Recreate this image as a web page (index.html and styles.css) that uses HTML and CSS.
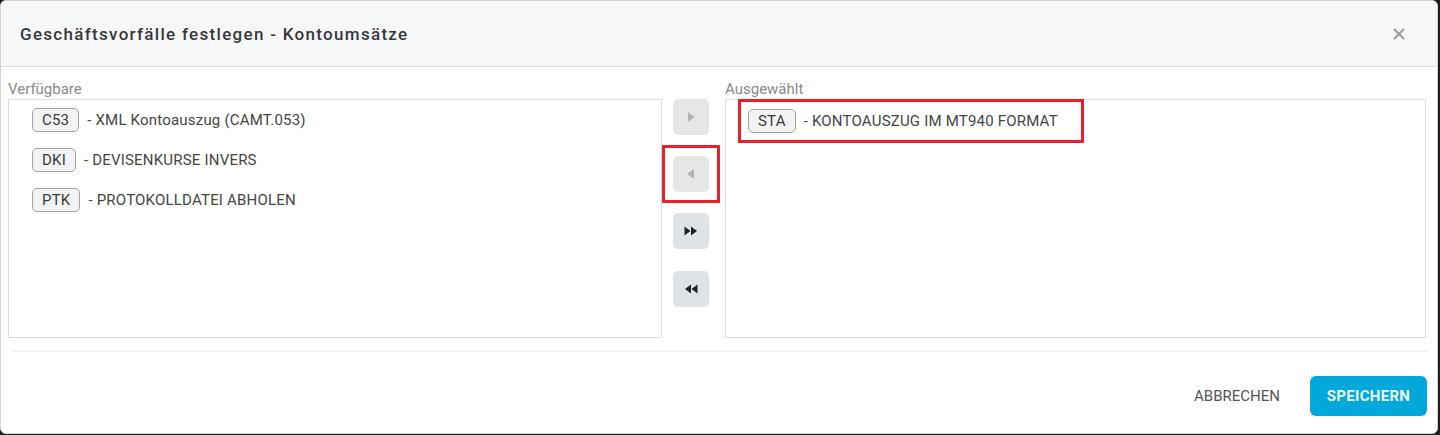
FILE: index.html
```html
<!DOCTYPE html>
<html lang="de">
<head>
<meta charset="utf-8">
<title>Geschäftsvorfälle festlegen</title>
<link rel="stylesheet" href="styles.css">
</head>
<body>
<div class="dialog">
  <header class="dlg-head">
    <h1 class="dlg-title">Geschäftsvorfälle festlegen - Kontoumsätze</h1>
    <button class="close" aria-label="Schließen">
      <svg width="12" height="12" viewBox="0 0 12 12"><path d="M1 1L11 11M11 1L1 11" stroke="#9a9a9a" stroke-width="2" fill="none"/></svg>
    </button>
  </header>
  <main class="dlg-body">
    <section class="col col-left">
      <div class="col-label">Verfügbare</div>
      <div class="listbox">
        <div class="item"><span class="badge">C53</span><span class="desc">- XML Kontoauszug (CAMT.053)</span></div>
        <div class="item"><span class="badge">DKI</span><span class="desc">- DEVISENKURSE INVERS</span></div>
        <div class="item"><span class="badge">PTK</span><span class="desc">- PROTOKOLLDATEI ABHOLEN</span></div>
      </div>
    </section>
    <div class="mover">
      <button class="mv disabled" aria-label="Hinzufügen">
        <svg width="8" height="12" viewBox="0 0 8 12"><path d="M1 1L7.5 6L1 11Z" fill="#b3b3b3"/></svg>
      </button>
      <button class="mv disabled marked" aria-label="Entfernen">
        <svg width="8" height="12" viewBox="0 0 8 12"><path d="M7 1L0.5 6L7 11Z" fill="#b3b3b3"/></svg>
      </button>
      <button class="mv" aria-label="Alle hinzufügen">
        <svg width="14" height="10" viewBox="0 0 14 10"><path d="M0.5 0.5L6.5 5L0.5 9.5Z M7 0.5L13 5L7 9.5Z" fill="#222"/></svg>
      </button>
      <button class="mv last" aria-label="Alle entfernen">
        <svg width="14" height="10" viewBox="0 0 14 10"><path d="M13.5 0.5L7.5 5L13.5 9.5Z M7 0.5L1 5L7 9.5Z" fill="#222"/></svg>
      </button>
    </div>
    <section class="col col-right">
      <div class="col-label">Ausgewählt</div>
      <div class="listbox">
        <div class="item marked-item"><span class="badge">STA</span><span class="desc">- KONTOAUSZUG IM MT940 FORMAT</span></div>
      </div>
    </section>
  </main>
  <footer class="dlg-foot">
    <button class="btn-text">ABBRECHEN</button>
    <button class="btn-primary">SPEICHERN</button>
  </footer>
</div>
</body>
</html>
```
FILE: styles.css
```css
* { box-sizing: border-box; }
html, body { margin: 0; padding: 0; }
body {
  background: #1e1e1e;
  width: 1440px;
  height: 435px;
  font-family: Roboto, "Liberation Sans", Arial, sans-serif;
  overflow: hidden;
}
.dialog {
  width: 1438px;
  height: 434px;
  background: #fff;
  border: 1px solid #d4d4d4;
  border-radius: 6px;
  overflow: hidden;
  display: flex;
  flex-direction: column;
}
.dlg-head {
  height: 66px;
  flex: none;
  background: #f6f7f9;
  border-bottom: 1px solid #dcdcdc;
  display: flex;
  align-items: center;
  justify-content: space-between;
  padding: 0 32px 0 19px;
}
.dlg-title {
  margin: 0;
  font-size: 17px;
  font-weight: 500;
  letter-spacing: 1.3px;
  color: #383838;
}
.close {
  border: 0;
  background: transparent;
  padding: 0;
  width: 12px;
  height: 12px;
  display: flex;
  cursor: pointer;
}
.dlg-body {
  display: flex;
  align-items: flex-start;
  padding: 13px 10px 0 7px;
  height: 272px;
  flex: none;
}
.col { display: flex; flex-direction: column; }
.col-left { width: 654px; }
.col-right { width: 701px; }
.col-label {
  font-size: 15px;
  color: #8a8a8a;
  height: 19px;
  line-height: 19px;
}
.listbox {
  height: 239px;
  border: 1px solid #dcdcdc;
  padding: 0 0 0 14px;
  display: flex;
  flex-direction: column;
  align-items: flex-start;
}
.col-left .listbox { padding-left: 15px; }
.item {
  height: 40px;
  display: inline-flex;
  align-items: center;
  padding: 0 24px 0 8px;
  font-size: 15px;
  letter-spacing: 0.2px;
  color: #454545;
}
.badge {
  display: inline-block;
  height: 24px;
  line-height: 22px;
  padding: 0 9px;
  border: 1px solid #a3a3a3;
  border-radius: 5px;
  background: #f3f3f3;
  color: #3a3a3a;
  font-size: 15px;
  letter-spacing: 0.2px;
  margin-right: 8px;
}
.marked-item {
  outline: 3px solid #e9202a;
  outline-offset: -1px;
  margin-top: 1px;
}
.mover {
  width: 63px;
  flex: none;
  display: flex;
  flex-direction: column;
  align-items: flex-start;
  padding: 19px 0 0 11px;
  gap: 21px;
}
.mv {
  width: 36px;
  height: 36px;
  border: 0;
  border-radius: 5px;
  background: #dfe2e7;
  padding: 0;
  display: flex;
  align-items: center;
  justify-content: center;
  cursor: pointer;
  position: relative;
}
.mv.disabled { background: #e6e6e6; cursor: default; }
.mv.last { margin-top: 1px; }
.mv.marked::after {
  content: "";
  position: absolute;
  left: -11px;
  top: -11px;
  right: -11px;
  bottom: -11px;
  border: 3px solid #e9202a;
  border-radius: 1px;
  pointer-events: none;
}
.dlg-foot {
  margin: 12px 10px 0 12px;
  border-top: 1px solid #ececec;
  display: flex;
  justify-content: flex-end;
  align-items: center;
  gap: 14px;
  padding-top: 24px;
}
.btn-text {
  border: 0;
  background: transparent;
  font-family: inherit;
  font-size: 15px;
  color: #555;
  padding: 0 16px;
  height: 40px;
  cursor: pointer;
}
.btn-primary {
  border: 0;
  background: #00a9d9;
  color: #eef8fb;
  font-family: inherit;
  font-size: 15px;
  font-weight: 700;
  letter-spacing: 0.3px;
  height: 40px;
  width: 117px;
  border-radius: 6px;
  cursor: pointer;
}
```
